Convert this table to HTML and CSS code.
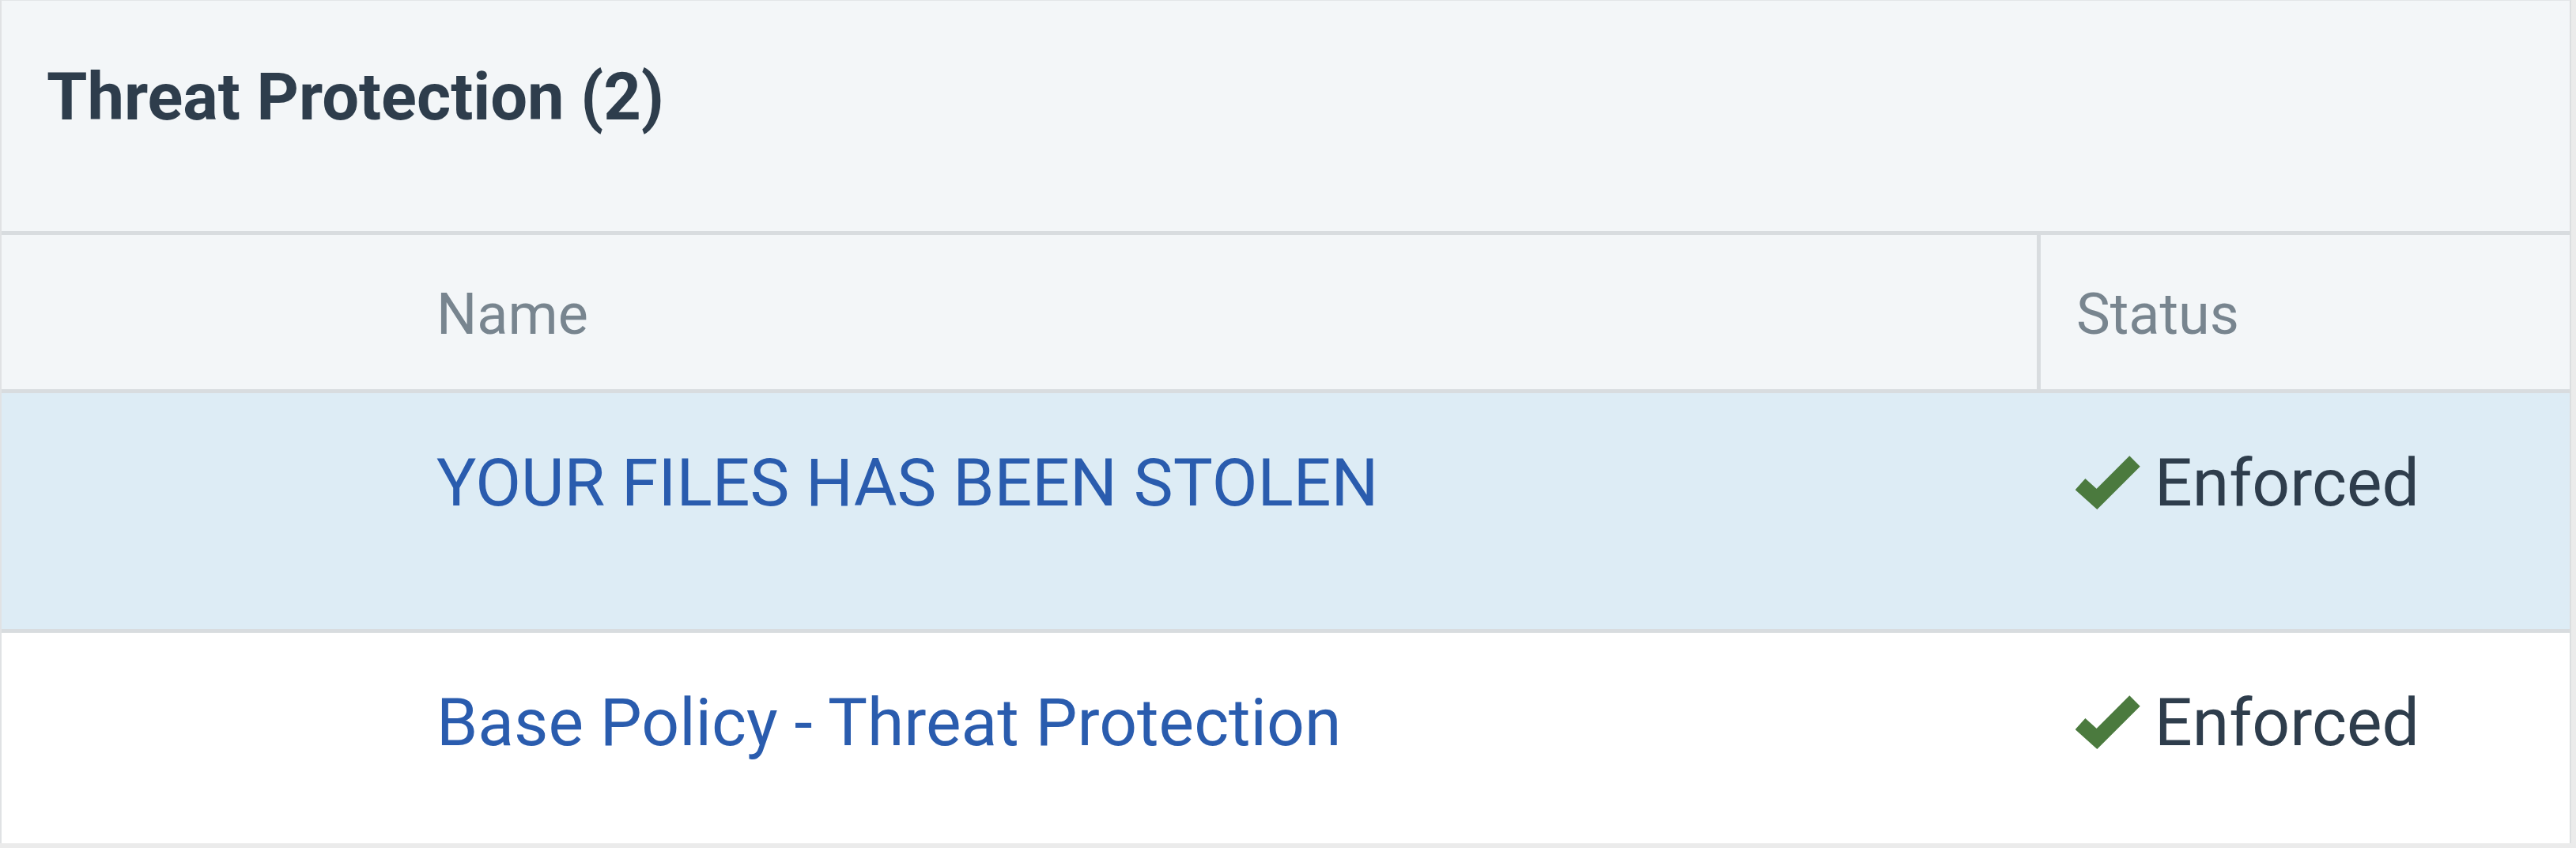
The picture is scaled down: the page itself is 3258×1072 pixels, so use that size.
FILE: index.html
```html
<!DOCTYPE html>
<html lang="en">
<head>
<meta charset="utf-8">
<title>Threat Protection</title>
<link rel="stylesheet" href="styles.css">
</head>
<body>
<section class="panel">
  <header class="panel-head">
    <h2 class="panel-title">Threat Protection (2)</h2>
  </header>
  <div class="table">
    <div class="row head-row">
      <div class="cell c-sel"></div>
      <div class="cell c-name">Name</div>
      <div class="cell c-status">Status</div>
    </div>
    <div class="row body-row selected">
      <div class="cell c-sel"></div>
      <div class="cell c-name"><a class="link" href="#">YOUR FILES HAS BEEN STOLEN</a></div>
      <div class="cell c-status">
        <svg class="check" viewBox="0 0 84 70" width="84" height="70" aria-hidden="true"><polyline points="6,36 27,55 75,7" fill="none" stroke="#4b7a3e" stroke-width="19" stroke-linejoin="miter" stroke-linecap="butt"/></svg>
        <span class="status-text">Enforced</span>
      </div>
    </div>
    <div class="row body-row last">
      <div class="cell c-sel"></div>
      <div class="cell c-name"><a class="link" href="#">Base Policy - Threat Protection</a></div>
      <div class="cell c-status">
        <svg class="check" viewBox="0 0 84 70" width="84" height="70" aria-hidden="true"><polyline points="6,36 27,55 75,7" fill="none" stroke="#4b7a3e" stroke-width="19" stroke-linejoin="miter" stroke-linecap="butt"/></svg>
        <span class="status-text">Enforced</span>
      </div>
    </div>
  </div>
</section>
</body>
</html>
```

FILE: styles.css
```css
html, body {
  margin: 0;
  padding: 0;
}
body {
  background: #ebebeb;
  font-family: Roboto, "Liberation Sans", Arial, sans-serif;
  width: 3258px;
  height: 1072px;
  overflow: hidden;
}
.panel {
  width: 3252px;
  box-sizing: border-box;
  border-left: 2px solid #e0e2e4;
  border-right: 2px solid #dcdee0;
  border-top: 1px solid #e3e6e8;
  background: #ffffff;
}
.panel-head {
  background: #f3f6f8;
  height: 296px;
  box-sizing: border-box;
  padding: 80px 0 0 57px;
  border-bottom: 5px solid #d8dcdf;
}
.panel-title {
  margin: 0;
  font-size: 83px;
  line-height: 83px;
  font-weight: 700;
  color: #2e3d4c;
}
.row {
  display: grid;
  grid-template-columns: 503px 2071px 1fr;
  border-bottom: 5px solid #d8dcdf;
}
.head-row {
  background: #f3f6f8;
  height: 195px;
}
.head-row .cell {
  padding-top: 65px;
  font-size: 72px;
  line-height: 72px;
  color: #78858f;
}
.head-row .c-name {
  padding-left: 47px;
}
.head-row .c-status {
  border-left: 5px solid #d8dcdf;
  padding-left: 45px;
}
.body-row {
  height: 298px;
  background: #ffffff;
}
.body-row.selected {
  background: #ddecf5;
}
.body-row.last {
  height: 266px;
  border-bottom: 0;
}
.body-row .cell {
  padding-top: 72px;
  font-size: 84px;
  line-height: 84px;
}
.body-row .c-name {
  padding-left: 47px;
}
.body-row .c-status {
  padding-left: 49px;
  display: flex;
  align-items: center;
  align-self: start;
  gap: 16px;
}
.link {
  color: #2a5cae;
  text-decoration: none;
}
.status-text {
  color: #2e3d4c;
}
.check {
  display: block;
  flex: none;
}
```
